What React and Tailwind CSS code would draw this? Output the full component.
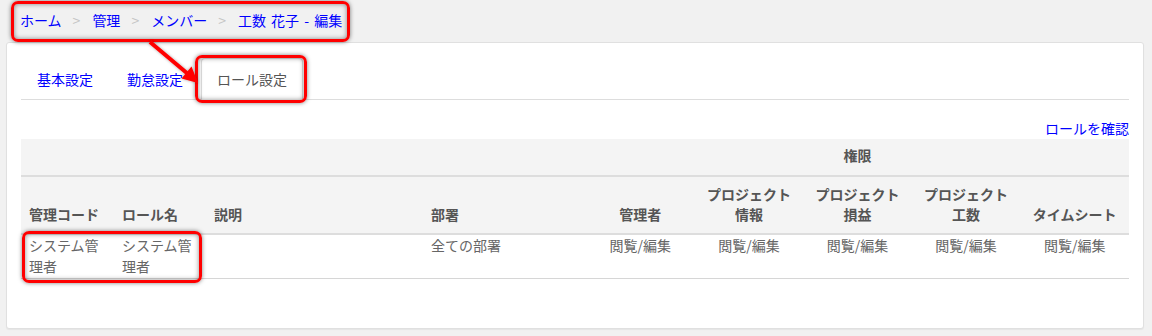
const FONT = { fontFamily: '"Noto Sans CJK JP", "Liberation Sans", sans-serif' };

const CRUMBS = ["ホーム", "管理", "メンバー", "工数 花子 - 編集"];
const TABS = [
  { label: "基本設定", active: false },
  { label: "勤怠設定", active: false },
  { label: "ロール設定", active: true },
];
const PERMS = [
  ["管理者"],
  ["プロジェクト", "情報"],
  ["プロジェクト", "損益"],
  ["プロジェクト", "工数"],
  ["タイムシート"],
];

function Mark({ className }) {
  return (
    <div
      className={`pointer-events-none absolute rounded-[7px] border-[3px] border-[#ff0000] shadow-[0_0_4px_rgba(0,0,0,0.5),inset_0_0_5px_rgba(0,0,0,0.45)] ${className}`}
    />
  );
}

export default function App() {
  return (
    <div className="relative h-[336px] w-[1152px] overflow-hidden bg-[#f1f1f1] text-[14px]" style={FONT}>
      {/* breadcrumb */}
      <div className="flex h-[42px] items-start pl-[20px] pt-[10px] leading-[20px]">
        {CRUMBS.map((c, i) => (
          <span key={c} className="flex">
            {i > 0 && <span className="pl-[11px] pr-[12px] text-[#c4c4c4]">&gt;</span>}
            <span className="text-[#0000ff] [word-spacing:2px]">{c}</span>
          </span>
        ))}
      </div>

      {/* card */}
      <div className="ml-[6px] h-[287px] w-[1138px] rounded-[3px] border border-[#e0e0e0] bg-white px-[14px] pt-[15px] shadow-[0_1px_1px_rgba(0,0,0,0.05)]">
        <ul className="flex border-b border-[#dddddd]">
          {TABS.map((t) => (
            <li
              key={t.label}
              className={`mb-[-1px] mr-[2px] border px-[15px] py-[10px] leading-[20px] ${
                t.active
                  ? "rounded-t-[4px] border-[#dddddd] border-b-transparent bg-white text-[#555555]"
                  : "border-transparent text-[#0000ff]"
              }`}
            >
              {t.label}
            </li>
          ))}
        </ul>

        <div className="mt-[18px] mb-[1px] text-right leading-[20px] text-[#0000ff]">ロールを確認</div>

        <table className="w-full table-fixed border-collapse text-[#666666]">
          <colgroup>
            <col className="w-[93px]" />
            <col className="w-[92px]" />
            <col className="w-[217px]" />
            <col className="w-[163px]" />
            <col />
            <col />
            <col />
            <col />
            <col />
          </colgroup>
          <thead className="bg-[#f4f4f4] font-bold text-[#555555]">
            <tr className="border-b-2 border-[#dddddd]">
              <th colSpan={4} />
              <th colSpan={5} className="px-2 pt-[6px] pb-[10px] text-center leading-[20px]">
                権限
              </th>
            </tr>
            <tr className="border-b-2 border-[#dddddd]">
              {["管理コード", "ロール名", "説明", "部署"].map((h) => (
                <th key={h} className="px-2 pt-[7px] pb-[9px] text-left align-bottom leading-[20px] whitespace-nowrap">
                  {h}
                </th>
              ))}
              {PERMS.map((p) => (
                <th key={p.join("")} className="px-1 pt-[7px] pb-[9px] text-center align-bottom leading-[20px]">
                  {p.map((l) => (
                    <div key={l}>{l}</div>
                  ))}
                </th>
              ))}
            </tr>
          </thead>
          <tbody>
            <tr className="border-b border-[#d6d6d6]">
              <td className="px-2 pb-px align-top leading-[21px]">システム管理者</td>
              <td className="px-2 pb-px align-top leading-[21px]">システム管理者</td>
              <td className="px-2 pb-px align-top leading-[21px]" />
              <td className="px-2 pb-px align-top leading-[21px]">全ての部署</td>
              {PERMS.map((p) => (
                <td key={p.join("")} className="px-1 pb-px text-center align-top leading-[21px]">
                  閲覧/編集
                </td>
              ))}
            </tr>
          </tbody>
        </table>
      </div>

      {/* annotations */}
      <Mark className="left-[11px] top-[1px] h-[41px] w-[339px]" />
      <Mark className="left-[195px] top-[55px] h-[48px] w-[112px]" />
      <Mark className="left-[22px] top-[231px] h-[52px] w-[180px]" />
      <svg className="pointer-events-none absolute left-0 top-0" width="1152" height="336">
        <defs>
          <filter id="sh" x="-20%" y="-20%" width="140%" height="140%">
            <feDropShadow dx="0" dy="0" stdDeviation="1.5" floodColor="#000" floodOpacity="0.35" />
          </filter>
        </defs>
        <g filter="url(#sh)">
          <line x1="150" y1="42" x2="188" y2="74" stroke="#ff0000" strokeWidth="4" />
          <polygon points="198,83 181.5,78.5 191.5,66.5" fill="#ff0000" />
        </g>
      </svg>
    </div>
  );
}
